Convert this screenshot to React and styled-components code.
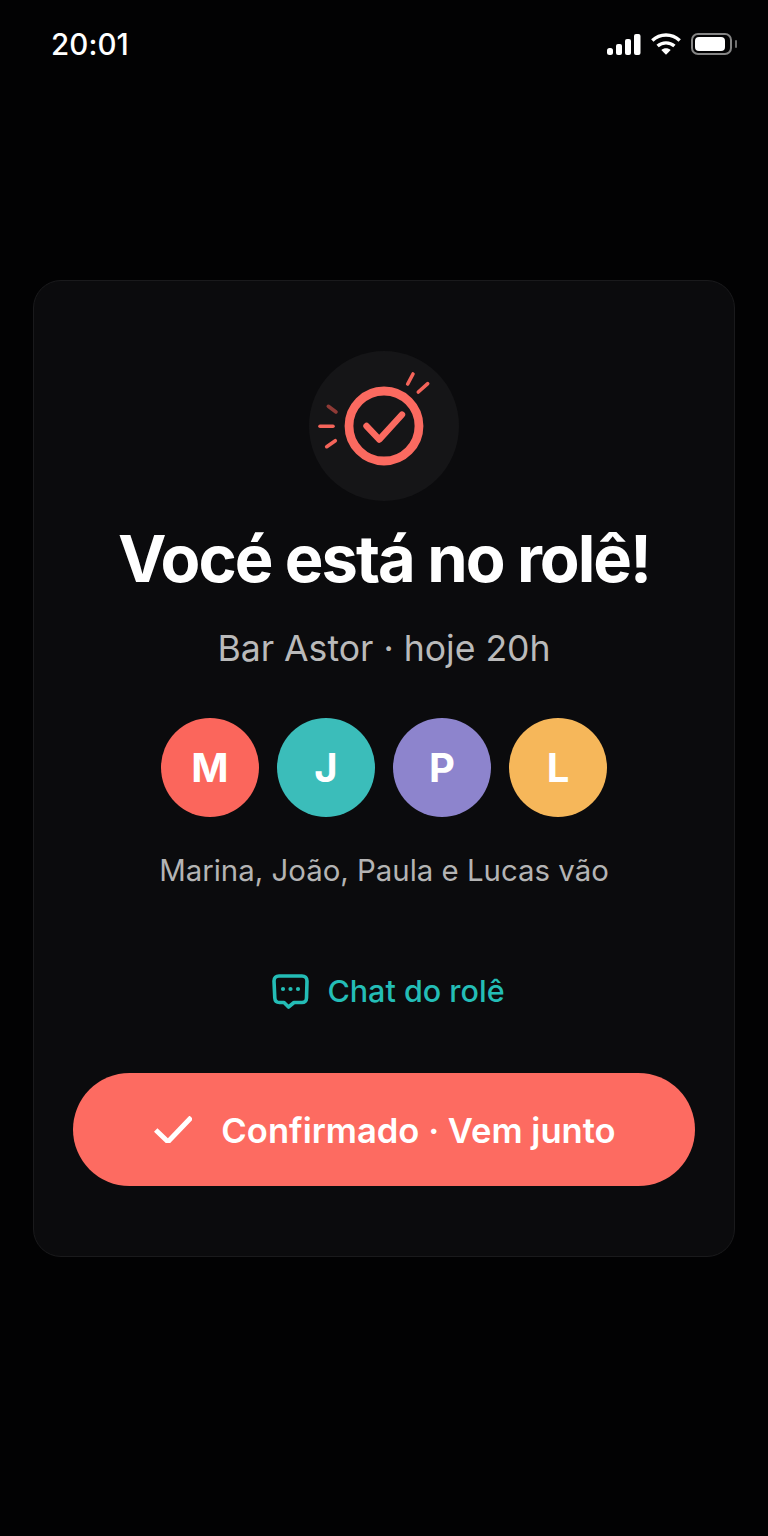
import React from 'react'
import styled, { createGlobalStyle } from 'styled-components'

const GlobalStyle = createGlobalStyle`
  html, body {
    margin: 0;
    padding: 0;
    background: #020203;
  }
  * { box-sizing: border-box; }
`

const friends = [
  { letter: 'M', color: '#fb665c' },
  { letter: 'J', color: '#3bbdba' },
  { letter: 'P', color: '#8d84cd' },
  { letter: 'L', color: '#f6b75a' },
]

const App = () => {
  return (
    <>
      <GlobalStyle />
      <Screen>
        <StatusBar>
          <Clock>20:01</Clock>
          <StatusIcons>
            <svg width="34" height="21" viewBox="0 0 34 21" fill="#fff">
              <rect x="0" y="14" width="6" height="7" rx="2.5" />
              <rect x="9" y="10" width="6" height="11" rx="2" />
              <rect x="18" y="5" width="6" height="16" rx="2" />
              <rect x="27" y="0" width="6.5" height="21" rx="2" />
            </svg>
            <svg width="30" height="22" viewBox="0 0 30 22" fill="none" stroke="#fff" strokeWidth="3.4">
              <path d="M1.3 7.6C9 0.2 21 0.2 28.7 7.6" />
              <path d="M6.6 13C11.3 8.8 18.7 8.8 23.4 13" />
              <path d="M15 21.8L10.3 17C12.9 14.8 17.1 14.8 19.7 17Z" fill="#fff" stroke="none" />
            </svg>
            <Battery>
              <BatteryFill />
              <BatteryCap />
            </Battery>
          </StatusIcons>
        </StatusBar>

        <Card>
          <Halo>
            <svg width="150" height="150" viewBox="0 0 150 150" fill="none">
              <circle cx="75" cy="75" r="35" stroke="#fb6a60" strokeWidth="8.8" />
              <path d="M57.5 75L70.3 88.5L93 63.7" stroke="#fb6a60" strokeWidth="6.4" strokeLinecap="round" strokeLinejoin="round" />
              <g stroke="#f4645a" strokeWidth="3.6" strokeLinecap="round">
                <path d="M98.7 33L104 23" />
                <path d="M109.3 41L118.7 32.7" />
                <path d="M11 75.3H24" />
                <path d="M17.7 95.7L26.3 89.7" />
                <path d="M19.3 55.3L27 61" stroke="#8f3a36" />
              </g>
            </svg>
          </Halo>

          <Title>Vocé está no rolê!</Title>
          <Subtitle>Bar Astor · hoje 20h</Subtitle>

          <AvatarRow>
            {friends.map((f) => (
              <Avatar key={f.letter} $color={f.color}>{f.letter}</Avatar>
            ))}
          </AvatarRow>

          <Names>Marina, João, Paula e Lucas vão</Names>

          <ChatLink>
            <svg width="37" height="35" viewBox="0 0 37 35" fill="none">
              <path
                d="M7 2H30C33 2 35 4 35 7L34.5 24C34.5 27 32.5 28.5 30 28.5H22L16.5 33L12 28.5H7.5C4.5 28.5 3 27 2.8 24L2 7C2 4 4 2 7 2Z"
                stroke="#24bdb6"
                strokeWidth="3.6"
                strokeLinejoin="round"
              />
              <circle cx="11" cy="15" r="2.1" fill="#24bdb6" />
              <circle cx="18.5" cy="15" r="2.1" fill="#24bdb6" />
              <circle cx="26" cy="15" r="2.1" fill="#24bdb6" />
            </svg>
            <span>Chat do rolê</span>
          </ChatLink>

          <ConfirmButton>
            <svg width="38" height="27" viewBox="0 0 38 27" fill="none">
              <path d="M1.7 14L14 25.7L37.3 1.3" stroke="#fff" strokeWidth="5" />
            </svg>
            <span>Confirmado · Vem junto</span>
          </ConfirmButton>
        </Card>
      </Screen>
    </>
  )
}

export default App

const Screen = styled.div`
  width: 768px;
  height: 1536px;
  background: #020203;
  font-family: Inter, "Liberation Sans", sans-serif;
  padding: 0 33px;
  overflow: hidden;
`

const StatusBar = styled.div`
  display: flex;
  justify-content: space-between;
  align-items: center;
  height: 88px;
  padding: 0 3px 0 18px;
`

const Clock = styled.div`
  color: #fff;
  font-size: 29.5px;
  font-weight: 500;
  letter-spacing: 0.1px;
`

const StatusIcons = styled.div`
  display: flex;
  align-items: center;
  gap: 10px;
`

const Battery = styled.div`
  position: relative;
  width: 41px;
  height: 22px;
  border: 2px solid #858585;
  border-radius: 7px;
  padding: 2px;
`

const BatteryFill = styled.div`
  width: 30px;
  height: 100%;
  background: #fff;
  border-radius: 4px;
`

const BatteryCap = styled.div`
  position: absolute;
  right: -7px;
  top: 5px;
  width: 2px;
  height: 8px;
  background: #6e6e6e;
  border-radius: 1px;
`

const Card = styled.div`
  margin-top: 192px;
  height: 977px;
  background: #0b0b0d;
  border: 1px solid #1a1a1c;
  border-radius: 28px;
  padding: 70px 39px 0;
  display: flex;
  flex-direction: column;
  align-items: center;
`

const Halo = styled.div`
  width: 150px;
  height: 150px;
  border-radius: 50%;
  background: #151517;
  display: flex;
`

const Title = styled.h1`
  margin: 22px 0 0;
  color: #fff;
  font-size: 65px;
  line-height: 72px;
  font-weight: 700;
  letter-spacing: -2px;
  white-space: nowrap;
`

const Subtitle = styled.div`
  margin-top: 33px;
  color: #bababa;
  font-size: 35.6px;
  line-height: 42px;
  font-weight: 400;
  white-space: nowrap;
`

const AvatarRow = styled.div`
  margin-top: 48px;
  display: flex;
  gap: 18px;
`

const Avatar = styled.div`
  width: 98px;
  height: 99px;
  border-radius: 50%;
  background: ${(p) => p.$color};
  color: #fff;
  font-size: 40px;
  font-weight: 700;
  display: flex;
  align-items: center;
  justify-content: center;
`

const Names = styled.div`
  margin-top: 36px;
  color: #b4b4b4;
  font-size: 29.4px;
  line-height: 36px;
  white-space: nowrap;
`

const ChatLink = styled.div`
  margin: 82px 0 0 9px;
  display: flex;
  align-items: center;
  gap: 18px;
  color: #24bdb6;
  font-size: 30.5px;
  font-weight: 500;
  line-height: 40px;
`

const ConfirmButton = styled.div`
  margin-top: 62px;
  width: 622px;
  height: 113px;
  border-radius: 57px;
  background: #fd6b61;
  color: #fff;
  font-size: 34.6px;
  font-weight: 600;
  display: flex;
  align-items: center;
  justify-content: center;
  gap: 29px;

  svg {
    margin-left: 2px;
  }
`
